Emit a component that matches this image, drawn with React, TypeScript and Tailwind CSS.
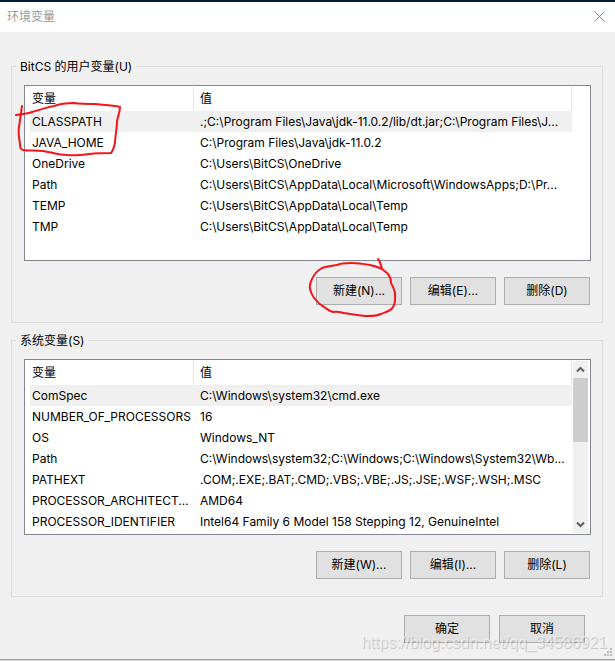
import React from 'react';

interface Variable {
  name: string;
  value: string;
}

const userVariables: Variable[] = [
  { name: 'CLASSPATH', value: '.;C:\\Program Files\\Java\\jdk-11.0.2/lib/dt.jar;C:\\Program Files\\J...' },
  { name: 'JAVA_HOME', value: 'C:\\Program Files\\Java\\jdk-11.0.2' },
  { name: 'OneDrive', value: 'C:\\Users\\BitCS\\OneDrive' },
  { name: 'Path', value: 'C:\\Users\\BitCS\\AppData\\Local\\Microsoft\\WindowsApps;D:\\Pr...' },
  { name: 'TEMP', value: 'C:\\Users\\BitCS\\AppData\\Local\\Temp' },
  { name: 'TMP', value: 'C:\\Users\\BitCS\\AppData\\Local\\Temp' },
];

const systemVariables: Variable[] = [
  { name: 'ComSpec', value: 'C:\\Windows\\system32\\cmd.exe' },
  { name: 'NUMBER_OF_PROCESSORS', value: '16' },
  { name: 'OS', value: 'Windows_NT' },
  { name: 'Path', value: 'C:\\Windows\\system32;C:\\Windows;C:\\Windows\\System32\\Wb...' },
  { name: 'PATHEXT', value: '.COM;.EXE;.BAT;.CMD;.VBS;.VBE;.JS;.JSE;.WSF;.WSH;.MSC' },
  { name: 'PROCESSOR_ARCHITECT...', value: 'AMD64' },
  { name: 'PROCESSOR_IDENTIFIER', value: 'Intel64 Family 6 Model 158 Stepping 12, GenuineIntel' },
];

const DialogButton = ({ children }: { children: React.ReactNode }) => (
  <button
    type="button"
    className="w-[86px] h-7 shrink-0 border border-[#adadad] bg-[#e1e1e1] text-center whitespace-nowrap hover:border-[#0078d7] hover:bg-[#e5f1fb]"
  >
    {children}
  </button>
);

const VariableTable = ({ rows }: { rows: Variable[] }) => (
  <table className="w-full table-fixed border-separate border-spacing-0 text-left whitespace-nowrap">
    <colgroup>
      <col className="w-[164px]" />
      <col />
    </colgroup>
    <thead>
      <tr className="h-6">
        <th className="p-0 pl-0.5 font-normal border-r border-[#e5e5e5]">变量</th>
        <th className="p-0 pl-1.5 font-normal border-r border-[#e5e5e5]">值</th>
      </tr>
    </thead>
    <tbody>
      {rows.map((row, i) => (
        <tr key={row.name} className={i === 0 ? 'h-[21px] bg-[#f0f0f0]' : 'h-[21px]'}>
          <td className="p-0 pl-0.5">{row.name}</td>
          <td className="p-0 pl-1.5">{row.value}</td>
        </tr>
      ))}
    </tbody>
  </table>
);

const ScrollBar = () => (
  <div className="w-[15px] shrink-0 mr-0.5 mb-px flex flex-col bg-[#f0f0f0]">
    <button type="button" aria-label="向上滚动" className="h-[17px] flex items-center justify-center">
      <svg width="9" height="7" viewBox="0 0 9 7" fill="none" stroke="#606060" strokeWidth="2">
        <path d="M1 5.5 4.5 2 8 5.5" />
      </svg>
    </button>
    <div className="h-16 bg-[#cdcdcd]" />
    <button type="button" aria-label="向下滚动" className="h-[17px] mt-auto flex items-center justify-center">
      <svg width="9" height="7" viewBox="0 0 9 7" fill="none" stroke="#606060" strokeWidth="2">
        <path d="M1 1.5 4.5 5 8 1.5" />
      </svg>
    </button>
  </div>
);

interface VariableGroupProps {
  title: string;
  rows: Variable[];
  scroll?: boolean;
  mark?: React.ReactNode;
  children: React.ReactNode;
}

const VariableGroup = ({ title, rows, scroll, mark, children }: VariableGroupProps) => (
  <fieldset className="min-w-0 border border-[#dcdcdc] pl-3 pr-[11px] pt-[11px] pb-[17px]">
    <legend className="-ml-2 px-1 h-4 leading-[18px]">{title}</legend>
    <div className="relative h-44 border border-[#828790] bg-white pt-px pl-[5px] flex items-stretch">
      <div className={scroll ? 'flex-1 min-w-0 mr-px' : 'flex-1 min-w-0 mr-[18px]'}>
        <VariableTable rows={rows} />
      </div>
      {scroll && <ScrollBar />}
      {mark}
    </div>
    <div className="mt-4 pr-px flex justify-end gap-2">{children}</div>
  </fieldset>
);

// Red pen marks drawn over the dialog
const NamesMark = () => (
  <svg
    className="absolute -left-2.5 top-3.5 pointer-events-none"
    width="110"
    height="60"
    viewBox="15 100 110 60"
    fill="none"
    stroke="#f5141b"
    strokeWidth="2"
    strokeLinecap="round"
    strokeLinejoin="round"
  >
    <path d="M16 115C22 114 27 114 32 112C40 110 47 107 54 106C62 103 68 103 74 103C82 104 87 104 94 104C103 105 112 105 120 107C120 112 118 116 117 121C117 129 115 137 115 143C114 147 113 151 111 153C104 153 97 153 90 154C82 155 74 156 67 155C58 155 51 152 43 151C36 150 29 151 23 150C20 149 20 147 20 144C19 138 18 132 19 127C20 120 21 113 22 106" />
  </svg>
);

const ButtonMark = () => (
  <svg
    className="absolute -left-2 -top-5 pointer-events-none"
    width="92"
    height="64"
    viewBox="308 257 92 64"
    fill="none"
    stroke="#f5141b"
    strokeWidth="2"
    strokeLinecap="round"
    strokeLinejoin="round"
  >
    <path d="M378 259C380 261 381 265 382 269C378 267 374 266 370 265C364 264 358 263 352 263C347 263 341 263 337 265C331 266 327 266 322 268C317 271 314 274 312 279C310 283 309 288 311 292C312 295 313 297 315 299C318 303 320 305 324 307C327 309 329 311 333 312C337 311 340 312 344 313C352 314 360 316 368 316C373 316 377 316 381 314C386 312 391 311 393 307C396 303 395 297 395 293C394 289 393 286 391 283C391 279 390 276 387 273L382 269" />
  </svg>
);

const ResizeGrip = () => (
  <svg className="absolute right-0.5 bottom-0.5" width="9" height="9" viewBox="0 0 9 9" fill="#b8b8b8">
    <path d="M6 0h2v2H6zM3 3h2v2H3zM6 3h2v2H6zM0 6h2v2H0zM3 6h2v2H3zM6 6h2v2H6z" />
  </svg>
);

export default function App() {
  return (
    <div className="w-full bg-[#f0f0f0] border-t-2 border-t-[#001c3a] font-[Inter,'Noto_Sans_CJK_SC',sans-serif] text-[12px] leading-4 text-black">
      <header className="h-[30px] pl-[7px] pr-2.5 flex items-center justify-between bg-white text-[#999999]">
        <h1>环境变量</h1>
        <button type="button" aria-label="关闭" className="pb-0.5 flex items-center justify-center">
          <svg width="11" height="11" viewBox="0 0 11 11" fill="none" stroke="#8a8a8a" strokeWidth="1">
            <path d="M.5.5l10 10M10.5.5l-10 10" />
          </svg>
        </button>
      </header>

      <main className="pl-[11px] pr-3 pt-[26px] flex flex-col gap-[9px]">
        <VariableGroup title="BitCS 的用户变量(U)" rows={userVariables} mark={<NamesMark />}>
          <div className="relative flex">
            <DialogButton>新建(N)...</DialogButton>
            <ButtonMark />
          </div>
          <DialogButton>编辑(E)...</DialogButton>
          <DialogButton>删除(D)</DialogButton>
        </VariableGroup>

        <VariableGroup title="系统变量(S)" rows={systemVariables} scroll>
          <DialogButton>新建(W)...</DialogButton>
          <DialogButton>编辑(I)...</DialogButton>
          <DialogButton>删除(L)</DialogButton>
        </VariableGroup>
      </main>

      <footer className="relative mt-[18px] pb-4 pr-[30px] flex justify-end gap-[9px] border-b border-[#a0a0a0]">
        <DialogButton>确定</DialogButton>
        <DialogButton>取消</DialogButton>
        <span className="absolute right-2 bottom-1.5 leading-5 font-['Liberation_Sans',sans-serif] text-[16px] text-[#f0f0f0]/70 [text-shadow:1px_1px_1px_#00000030] pointer-events-none">
          https://blog.csdn.net/qq_34586921
        </span>
        <ResizeGrip />
      </footer>
      <div className="h-px bg-[#d0d0d0]" />
    </div>
  );
}
